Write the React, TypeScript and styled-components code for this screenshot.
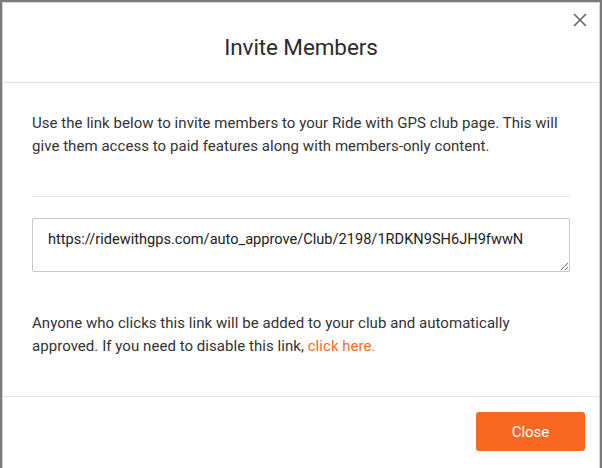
import React from "react";
import styled, { createGlobalStyle } from "styled-components";

const Global = createGlobalStyle`
  html, body { margin: 0; padding: 0; }
  body { background: #7b7b7b; font-family: Roboto, "Liberation Sans", sans-serif; }
  * { box-sizing: border-box; }
`;

const Backdrop = styled.div`
  width: 602px;
  height: 468px;
  background: #7b7b7b;
  padding: 2px 2px 0 2px;
  overflow: hidden;
`;

const Modal = styled.div`
  position: relative;
  background: #fff;
  border: 1px solid #d8d8d8;
  height: 470px;
  display: flex;
  flex-direction: column;
`;

const Header = styled.div`
  height: 80px;
  border-bottom: 1px solid #e3e3e3;
  display: flex;
  align-items: center;
  justify-content: center;
  padding-top: 9px;
`;

const Title = styled.h2`
  margin: 0;
  font-weight: 400;
  font-size: 22.5px;
  color: #2b2b2b;
  letter-spacing: -0.1px;
`;

const CloseX = styled.button`
  position: absolute;
  top: 7px;
  right: 9px;
  width: 20px;
  height: 20px;
  padding: 0;
  border: 0;
  background: none;
  display: flex;
  align-items: center;
  justify-content: center;
  cursor: pointer;
`;

const Body = styled.div`
  padding: 0 29px;
`;

const Paragraph = styled.p<{ $top: number }>`
  margin: ${(p) => p.$top}px 0 0 0;
  font-size: 15px;
  line-height: 23px;
  color: #333;
  letter-spacing: 0.05px;
`;

const Divider = styled.hr`
  margin: 38px 0 0 0;
  border: 0;
  border-top: 1px solid #e6e6e6;
`;

const LinkBox = styled.textarea`
  display: block;
  width: 100%;
  height: 54px;
  margin-top: 21px;
  padding: 11px 15px;
  border: 1px solid #c8c8c8;
  border-radius: 2px;
  font-family: Roboto, "Liberation Sans", sans-serif;
  font-size: 14.6px;
  color: #222;
  resize: vertical;
  outline: none;
`;

const Orange = styled.a`
  color: #f96a25;
  text-decoration: none;
`;

const Footer = styled.div`
  margin-top: 38px;
  border-top: 1px solid #e3e3e3;
  display: flex;
  justify-content: flex-end;
  padding: 15px 14px 0 0;
`;

const Button = styled.button`
  width: 109px;
  height: 39px;
  background: #f96823;
  color: #fff;
  border: 0;
  border-radius: 3px;
  font-family: Roboto, "Liberation Sans", sans-serif;
  font-size: 15px;
  cursor: pointer;
`;

export default function App() {
  return (
    <Backdrop>
      <Global />
      <Modal>
        <Header>
          <Title>Invite Members</Title>
        </Header>
        <CloseX aria-label="Close">
          <svg width="14" height="14" viewBox="0 0 14 14">
            <path d="M1 1 L13 13 M13 1 L1 13" stroke="#666" strokeWidth="1.6" fill="none" />
          </svg>
        </CloseX>
        <Body>
          <Paragraph $top={29}>
            Use the link below to invite members to your Ride with GPS club page. This will give them
            access to paid features along with members-only content.
          </Paragraph>
          <Divider />
          <LinkBox readOnly value="https://ridewithgps.com/auto_approve/Club/2198/1RDKN9SH6JH9fwwN" />
          <Paragraph $top={40}>
            Anyone who clicks this link will be added to your club and automatically approved. If you
            need to disable this link, <Orange href="#">click here.</Orange>
          </Paragraph>
        </Body>
        <Footer>
          <Button>Close</Button>
        </Footer>
      </Modal>
    </Backdrop>
  );
}
